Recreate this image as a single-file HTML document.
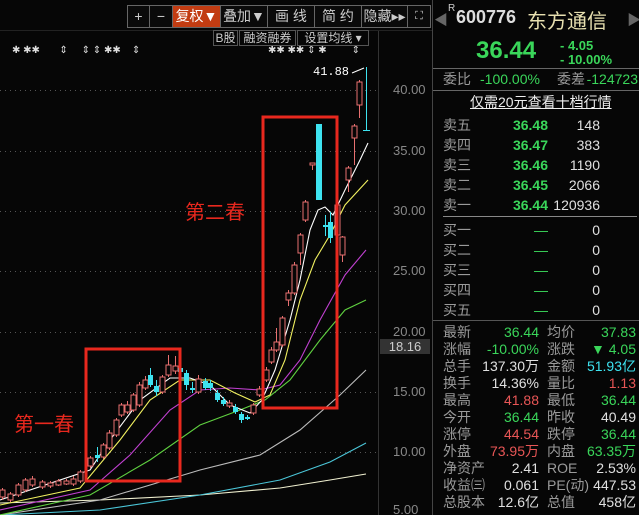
<!DOCTYPE html>
<html><head><meta charset="utf-8"><style>
*{margin:0;padding:0;box-sizing:border-box}
html{width:639px;height:515px;overflow:hidden}
body{width:639px;height:515px;background:#060606;overflow:hidden;position:relative;font-family:"Liberation Sans","Noto Sans CJK SC",sans-serif;color:#ddd}
.a{position:absolute;white-space:nowrap}
.btn{position:absolute;top:5px;height:23px;border:1px solid #666;background:#0a0a0a;color:#ccc;font-size:14px;line-height:21px;text-align:center}
.b2{position:absolute;top:30px;height:16px;border:1px solid #555;color:#ccc;font-size:12px;line-height:14px;text-align:center}
.row{position:absolute;left:440px;width:198px;height:20px;font-size:14px;line-height:20px}
.row span{position:absolute}
.g{color:#3ad65a}.r{color:#e85656}.w{color:#e0e0e0}.l{color:#9a9a9a}.c{color:#3ee3f0}
.st{position:absolute;left:440px;width:198px;height:17px;font-size:14px;line-height:17px}
.st span{position:absolute}
.ax{position:absolute;left:393px;font-size:13px;color:#888}
</style></head><body>
<svg class="a" style="left:0;top:0" width="639" height="515">
<g stroke="#555" stroke-dasharray="1,4" stroke-width="1">
<line x1="0" y1="90.5" x2="378" y2="90.5"/><line x1="0" y1="151.5" x2="378" y2="151.5"/><line x1="0" y1="211.5" x2="378" y2="211.5"/><line x1="0" y1="271.5" x2="378" y2="271.5"/><line x1="0" y1="332.5" x2="378" y2="332.5"/><line x1="0" y1="392.5" x2="378" y2="392.5"/><line x1="0" y1="452.5" x2="378" y2="452.5"/>
</g>
<line x1="378.5" y1="30" x2="378.5" y2="515" stroke="#333"/>
<line x1="432.5" y1="0" x2="432.5" y2="515" stroke="#444"/>
<line x1="0" y1="30.5" x2="432" y2="30.5" stroke="#222"/>
<g fill="none" stroke-width="1.1">
<polyline stroke="#f0f0d0" points="0,503 100,500 200,495 280,488 330,480 366,474"/>
<polyline stroke="#4bc6d8" points="0,515 100,510 200,495 280,480 330,462 366,443"/>
<polyline stroke="#bbb" points="0,515 100,500 200,470 260,455 300,430 340,395 366,370"/>
<polyline stroke="#5fd040" points="0,515 90,495 150,460 200,425 240,410 265,400 290,380 320,340 345,310 366,300"/>
<polyline stroke="#c040d0" points="0,510 90,490 130,455 170,410 200,390 230,388 260,390 280,385 300,360 320,320 345,275 366,250"/>
<polyline stroke="#f0f060" points="0,505 80,488 120,440 150,400 180,380 210,380 235,393 255,402 270,395 285,360 300,300 315,260 330,235 345,205 368,180"/>
<polyline stroke="#fff" points="0,500 90,470 110,440 140,400 170,378 190,378 210,385 230,405 250,413 262,400 275,370 290,320 300,280 310,230 318,210 325,207 333,215 345,190 360,160 368,143"/>
</g>
<g id="cd"></g>
<rect x="86" y="349" width="94" height="132" fill="none" stroke="#e8281e" stroke-width="3"/>
<rect x="263" y="117" width="74" height="291" fill="none" stroke="#e8281e" stroke-width="3"/>
<line x1="352" y1="73" x2="364" y2="68" stroke="#fff"/>
</svg>
<div class="a" style="left:14px;top:408px;font-size:20px;color:#e8281e">第一春</div>
<div class="a" style="left:185px;top:196px;font-size:20px;color:#e8281e">第二春</div>
<div class="a" style="left:313px;top:65px;font-size:12px;color:#fff;font-family:'Liberation Mono',monospace">41.88</div>
<div class="a" style="left:12px;top:45px;font-size:10px;color:#ddd">✱&nbsp;✱✱&nbsp;&nbsp;&nbsp;&nbsp;&nbsp;&nbsp;&nbsp;⇕&nbsp;&nbsp;&nbsp;&nbsp;&nbsp;⇕&nbsp;⇕&nbsp;✱✱&nbsp;&nbsp;&nbsp;&nbsp;⇕</div>
<div class="a" style="left:268px;top:45px;font-size:10px;color:#ddd">✱✱&nbsp;✱✱&nbsp;⇕&nbsp;✱&nbsp;&nbsp;&nbsp;&nbsp;&nbsp;&nbsp;&nbsp;&nbsp;&nbsp;⇕</div>
<div class="btn" style="left:127px;width:23px">+</div>
<div class="btn" style="left:149px;width:24px">−</div>
<div class="btn" style="left:172px;width:49px;background:#c23c12;color:#fff">复权▼</div>
<div class="btn" style="left:220px;width:48px">叠加▼</div>
<div class="btn" style="left:267px;width:48px">画 线</div>
<div class="btn" style="left:314px;width:48px">简 约</div>
<div class="btn" style="left:361px;width:47px">隐藏▸▸</div>
<div class="btn" style="left:407px;width:24px;font-size:11px">⛶</div>
<div class="b2" style="left:213px;width:25px">B股</div>
<div class="b2" style="left:239px;width:57px">融资融券</div>
<div class="b2" style="left:297px;width:72px">设置均线 ▾</div>
<div class="ax" style="top:82px">40.00</div>
<div class="ax" style="top:143px">35.00</div>
<div class="ax" style="top:203px">30.00</div>
<div class="ax" style="top:263px">25.00</div>
<div class="ax" style="top:324px">20.00</div>
<div class="a" style="left:380px;top:339px;width:50px;height:15px;background:#333;font-size:13px;line-height:15px;color:#ccc;text-align:center">18.16</div>
<div class="ax" style="top:384px">15.00</div>
<div class="ax" style="top:444px">10.00</div>
<div class="ax" style="top:502px">5.00</div>

<div class="a" style="left:434px;top:10px;font-size:14px;color:#666">◀</div>
<div class="a" style="left:627px;top:10px;font-size:14px;color:#666">▶</div>
<div class="a" style="left:448px;top:3px;font-size:10px;color:#ccc">R</div>
<div class="a" style="left:456px;top:7px;font-size:18px;color:#ddd;font-weight:bold">600776</div>
<div class="a" style="left:527px;top:5px;font-size:20px;color:#e8e0b0">东方通信</div>
<div class="a" style="left:476px;top:37px;font-size:24px;color:#3ad65a;font-weight:bold">36.44</div>
<div class="a" style="left:560px;top:38px;font-size:13px;color:#3ad65a;font-weight:bold">- 4.05</div>
<div class="a" style="left:560px;top:52px;font-size:13px;color:#3ad65a;font-weight:bold">- 10.00%</div>
<div class="a" style="left:433px;top:68px;width:206px;height:1px;background:#666"></div>
<div class="row" style="top:69px"><span class="l" style="left:3px">委比</span><span class="g" style="left:40px">-100.00%</span><span class="l" style="left:117px">委差</span><span class="g" style="right:0">-124723</span></div>
<div class="a" style="left:433px;top:90px;width:206px;height:1px;background:#666"></div>
<div class="a" style="left:470px;top:92px;font-size:14px;color:#eee;text-decoration:underline">仅需20元查看十档行情</div>
<div class="row" style="top:115px"><span class="l" style="left:3px">卖五</span><span class="g" style="right:90px;font-weight:bold">36.48</span><span class="w" style="right:38px">148</span></div>
<div class="row" style="top:135px"><span class="l" style="left:3px">卖四</span><span class="g" style="right:90px;font-weight:bold">36.47</span><span class="w" style="right:38px">383</span></div>
<div class="row" style="top:155px"><span class="l" style="left:3px">卖三</span><span class="g" style="right:90px;font-weight:bold">36.46</span><span class="w" style="right:38px">1190</span></div>
<div class="row" style="top:175px"><span class="l" style="left:3px">卖二</span><span class="g" style="right:90px;font-weight:bold">36.45</span><span class="w" style="right:38px">2066</span></div>
<div class="row" style="top:195px"><span class="l" style="left:3px">卖一</span><span class="g" style="right:90px;font-weight:bold">36.44</span><span class="w" style="right:38px">120936</span></div>
<div class="a" style="left:443px;top:216px;width:194px;height:1px;background:#888"></div>
<div class="row" style="top:220px"><span class="l" style="left:3px">买一</span><span class="g" style="right:90px">—</span><span class="w" style="right:38px">0</span></div>
<div class="row" style="top:240px"><span class="l" style="left:3px">买二</span><span class="g" style="right:90px">—</span><span class="w" style="right:38px">0</span></div>
<div class="row" style="top:260px"><span class="l" style="left:3px">买三</span><span class="g" style="right:90px">—</span><span class="w" style="right:38px">0</span></div>
<div class="row" style="top:280px"><span class="l" style="left:3px">买四</span><span class="g" style="right:90px">—</span><span class="w" style="right:38px">0</span></div>
<div class="row" style="top:300px"><span class="l" style="left:3px">买五</span><span class="g" style="right:90px">—</span><span class="w" style="right:38px">0</span></div>
<div class="a" style="left:433px;top:320px;width:206px;height:1px;background:#555"></div>
<div class="st" style="top:324px"><span class="l" style="left:3px">最新</span><span class="g" style="right:99px">36.44</span><span class="l" style="left:107px">均价</span><span class="g" style="right:2px">37.83</span></div>
<div class="st" style="top:341px"><span class="l" style="left:3px">涨幅</span><span class="g" style="right:99px">-10.00%</span><span class="l" style="left:107px">涨跌</span><span class="g" style="right:2px">▼ 4.05</span></div>
<div class="st" style="top:358px"><span class="l" style="left:3px">总手</span><span class="w" style="right:99px">137.30万</span><span class="l" style="left:107px">金额</span><span class="c" style="right:2px">51.93亿</span></div>
<div class="st" style="top:375px"><span class="l" style="left:3px">换手</span><span class="w" style="right:99px">14.36%</span><span class="l" style="left:107px">量比</span><span class="r" style="right:2px">1.13</span></div>
<div class="st" style="top:392px"><span class="l" style="left:3px">最高</span><span class="r" style="right:99px">41.88</span><span class="l" style="left:107px">最低</span><span class="g" style="right:2px">36.44</span></div>
<div class="st" style="top:409px"><span class="l" style="left:3px">今开</span><span class="g" style="right:99px">36.44</span><span class="l" style="left:107px">昨收</span><span class="w" style="right:2px">40.49</span></div>
<div class="st" style="top:426px"><span class="l" style="left:3px">涨停</span><span class="r" style="right:99px">44.54</span><span class="l" style="left:107px">跌停</span><span class="g" style="right:2px">36.44</span></div>
<div class="st" style="top:443px"><span class="l" style="left:3px">外盘</span><span class="r" style="right:99px">73.95万</span><span class="l" style="left:107px">内盘</span><span class="g" style="right:2px">63.35万</span></div>
<div class="st" style="top:460px"><span class="l" style="left:3px">净资产</span><span class="w" style="right:99px">2.41</span><span class="l" style="left:107px">ROE</span><span class="w" style="right:2px">2.53%</span></div>
<div class="st" style="top:477px"><span class="l" style="left:3px">收益㈢</span><span class="w" style="right:99px">0.061</span><span class="l" style="left:107px">PE(动)</span><span class="w" style="right:2px">447.53</span></div>
<div class="st" style="top:494px"><span class="l" style="left:3px">总股本</span><span class="w" style="right:99px">12.6亿</span><span class="l" style="left:107px">总值</span><span class="w" style="right:2px">458亿</span></div>
<script>
var C=[[2,490,497,488,500,0],[10,494,500,492,502,0],[18,485,495,483,497,0],[25,480,490,478,492,0],[32,479,485,476,487,0],[42,482,487,480,489,0],[50,483,486,481,488,0],[58,481,485,479,486,0],[66,481,484,479,485,0],[73,479,484,476,486,0],[80,472,481,470,483,0],
[90,458,466,456,468,0],[97,455,458,447,462,1],[103,445,457,443,459,0],[109,433,448,430,450,0],[116,420,435,418,437,0],[121,405,415,403,417,0],[127,405,412,401,414,0],[133,395,410,393,412,0],[139,385,405,382,407,0],[145,380,388,376,390,0],[150,375,385,368,387,1],[156,386,392,380,396,1],[162,377,392,375,394,0],[168,365,375,355,377,0],[175,366,371,356,374,0],[180,368,372,366,376,1],
[186,373,385,370,390,1],[192,388,390,382,393,1],[198,379,392,375,394,0],[205,381,388,378,390,1],[210,383,388,380,391,1],[217,393,400,390,402,1],[223,400,404,397,406,1],[229,403,406,400,408,0],[235,407,412,404,414,1],[241,414,420,412,423,1],[247,417,419,415,420,1],[253,405,413,403,415,0],[259,389,395,386,397,0],
[266,370,380,367,382,0],[271,350,362,347,364,0],[276,342,350,328,352,0],[282,318,345,316,347,0],[288,293,300,290,306,0],[294,265,293,262,295,0],[300,235,253,233,265,0],[305,202,220,200,222,0],[312,163,165,163,170,0],[325,225,227,215,236,1],[330,222,238,212,243,1],[337,205,235,203,240,0],[342,237,255,236,262,0],[348,168,180,166,192,0],[354,126,138,124,165,0],[359,82,105,80,118,0]];
var s='';C.forEach(function(c){var col=c[5]?'#3ee3f0':'#e87070';var x=c[0];
s+='<line x1="'+(x+0.5)+'" y1="'+c[3]+'" x2="'+(x+0.5)+'" y2="'+c[4]+'" stroke="'+col+'"/>';
if(c[5])s+='<rect x="'+(x-2)+'" y="'+c[1]+'" width="5" height="'+Math.max(1,c[2]-c[1])+'" fill="'+col+'"/>';
else s+='<rect x="'+(x-2)+'" y="'+c[1]+'" width="5" height="'+Math.max(1,c[2]-c[1])+'" fill="#060606" stroke="'+col+'"/>';});
s+='<rect x="316" y="124" width="6" height="76" fill="#3ee3f0"/>';
s+='<line x1="366.5" y1="67" x2="366.5" y2="131" stroke="#3ee3f0"/><line x1="363" y1="130.5" x2="370" y2="130.5" stroke="#3ee3f0"/>';
document.getElementById('cd').innerHTML=s;
</script>
</body></html>
